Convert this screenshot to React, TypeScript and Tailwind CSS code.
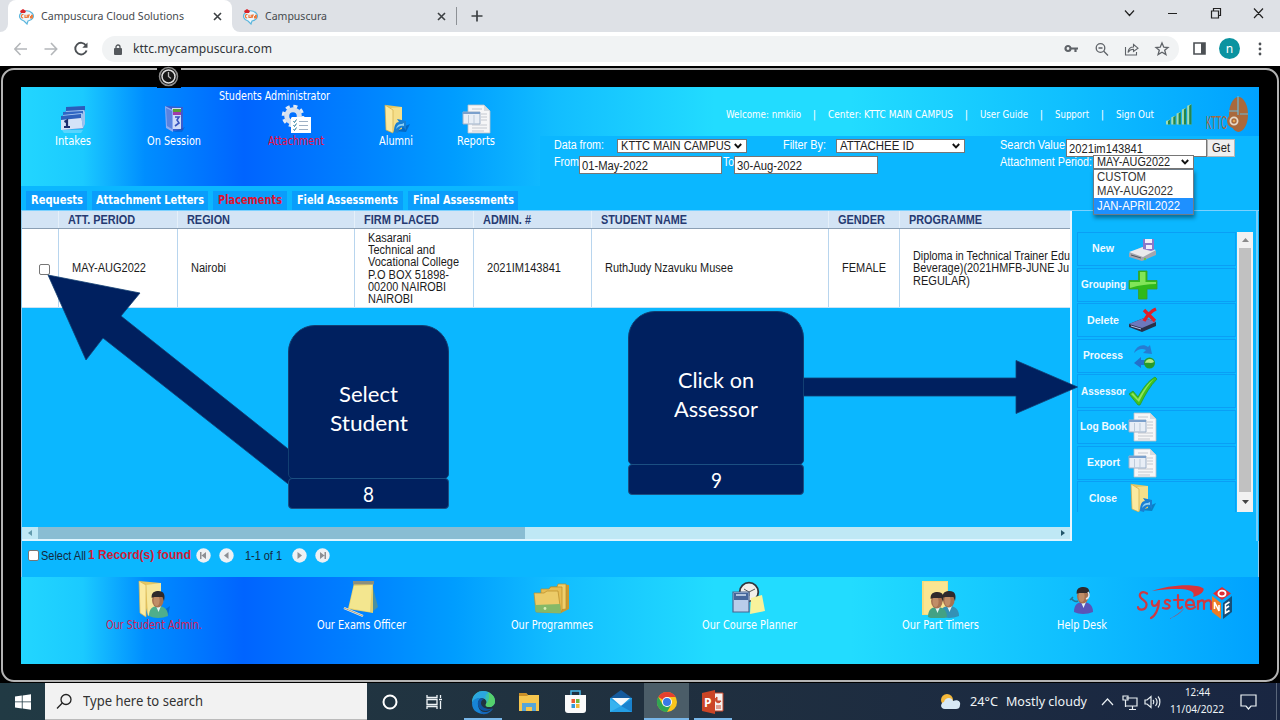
import { useLayoutEffect, useRef, useState } from 'react';
import type { ReactNode } from 'react';

const UI = "font-['Noto_Sans',sans-serif]";
const APP = "font-['DejaVu_Sans_Condensed','DejaVu_Sans',sans-serif]";

/* One line of text condensed or widened to a fixed width. */
function Fit({ w, className = '', children }: { w: number; className?: string; children: ReactNode }) {
  const ref = useRef<HTMLSpanElement>(null);
  const [scale, setScale] = useState(1);
  useLayoutEffect(() => {
    if (ref.current) {
      const rect = ref.current.getBoundingClientRect();
      if (rect.width > 0) setScale(w / rect.width);
    }
  }, [w]);
  return (
    <span className={`block shrink-0 whitespace-nowrap ${className}`} style={{ width: w }}>
      <span className="block w-max origin-left" ref={ref} style={{ transform: `scaleX(${scale})` }}>
        {children}
      </span>
    </span>
  );
}

/* ---------- browser chrome ---------- */

function Favicon() {
  return (
    <svg width="17" height="17" viewBox="0 0 17 17" className="shrink-0">
      <path d="M3 5C0 8 2 12 6 13L9 16L10 13C15 12 17 8 14 5C11 2 6 2 3 5Z" fill="#eef6fb" stroke="#5bb6dd" strokeWidth="1.2" />
      <path d="M2 3L5 1L8 3L7 5H3Z" fill="#d8232a" />
      <path d="M5.500 6.500C3 6 2.500 10 5.200 9.800M7 6.800V9.500H9.200V6.800M10.500 9.800V7H12M13 7.300H14.300V9.800H12.600V8.600H14" fill="none" stroke="#ee7a3a" strokeWidth="1.2" />
    </svg>
  );
}

function Cross({ className = '' }: { className?: string }) {
  return (
    <svg width="9" height="9" viewBox="0 0 9 9" className={`shrink-0 ${className}`}>
      <path d="M1 1L8 8M8 1L1 8" stroke="#3c4043" strokeWidth="1.6" />
    </svg>
  );
}

function TabStrip() {
  return (
    <div className={`flex h-8 items-stretch bg-[#dee1e6] ${UI}`}>
      <div className="w-2 bg-white"><div className="h-full rounded-br-lg bg-[#dee1e6]" /></div>
      <div className="flex w-[224px] items-center rounded-t-lg bg-white pl-2.5">
        <Favicon />
        <Fit w={143} className="ml-[6px] text-[11.5px] text-[#45494d]">Campuscura Cloud Solutions</Fit>
        <Cross className="ml-[29px]" />
      </div>
      <div className="flex w-[224px] items-center bg-white">
        <div className="flex h-full w-full items-center rounded-bl-lg bg-[#dee1e6] pl-2.5">
          <Favicon />
          <Fit w={62} className="ml-[6px] text-[11.5px] text-[#45494d]">Campuscura</Fit>
          <Cross className="ml-[110px]" />
        </div>
      </div>
      <div className="my-[7px] w-px bg-[#8d9196]" />
      <svg width="12" height="12" viewBox="0 0 12 12" className="ml-[14px] mt-[10px]">
        <path d="M6 .5V11.500M.5 6H11.500" stroke="#3c4043" strokeWidth="1.700" />
      </svg>
      <svg width="150" height="14" viewBox="0 0 150 14" className="ml-auto mr-[6px] mt-[6px]" fill="none" stroke="#222" strokeWidth="1.200">
        <path d="M1 4.500L5.500 9.500L10 4.500M44 7.500H53M87.500 5H94.500V12H87.500ZM89.500 5V2.500H96.500V9.500H94.500M130 2.500L139 12M139 2.500L130 12" />
      </svg>
    </div>
  );
}

function AddressBar() {
  return (
    <div className={`flex h-[34px] items-start bg-white pt-1 ${UI}`}>
      <svg width="76" height="26" viewBox="0 0 76 26" className="ml-[14px] shrink-0" fill="none">
        <path d="M13 13H1M6.500 7L.8 13L6.500 19M30.500 13H42.500M37 7L42.700 13L37 19" stroke="#b4b7ba" strokeWidth="1.600" />
        <path d="M72 9.500A5.800 5.800 0 1 0 72.600 14.500" stroke="#4c5054" strokeWidth="1.900" />
        <path d="M73.500 6.500V11.800H68.300Z" fill="#4c5054" />
      </svg>
      <div className="ml-[12px] flex h-[26px] w-[1077px] items-center rounded-full bg-[#f1f3f4] pl-3">
        <svg width="8" height="11" viewBox="0 0 8 11"><path d="M2 4.500V3A2 2 0 0 1 6 3V4.500" fill="none" stroke="#54585c" strokeWidth="1.300" /><rect y="4" width="8" height="7" rx="1" fill="#54585c" /></svg>
        <Fit w={139} className="ml-[11px] text-[13px] text-[#303438]">kttc.mycampuscura.com</Fit>
        <svg width="106" height="18" viewBox="0 0 106 18" className="ml-auto mr-[9px]" fill="none" stroke="#5f6368" strokeWidth="1.300">
          <circle cx="4" cy="8.500" r="2.500" strokeWidth="2.200" /><path d="M7 8.500H14M11.500 8.500V12" strokeWidth="2.200" />
          <circle cx="36.500" cy="8" r="4.300" /><path d="M39.800 11.300L44 15.500M34.500 8H38.500" />
          <path d="M61.500 7V15H72.500V12M64 12.500C64.500 8 67 7 69.500 7V4.500L74 8.200L69.500 11.500V9.300C67 9.300 65.500 10 64 12.500Z" strokeWidth="1.100" />
          <path d="M98 3L99.800 7.200L104 7.500L100.700 10.300L101.900 14.500L98 12.200L94.100 14.500L95.300 10.300L92 7.500L96.200 7.200Z" />
        </svg>
      </div>
      <svg width="13" height="13" viewBox="0 0 13 13" className="ml-[14px] mt-[6px]"><path d="M1 1H12V12H1Z" fill="none" stroke="#4c5054" strokeWidth="1.600" /><path d="M8 1H12V12H8Z" fill="#4c5054" /></svg>
      <div className="ml-[13px] mt-[2px] flex size-[21px] items-center justify-center rounded-full bg-[#0b93a0] text-[12px] leading-none text-white">n</div>
      <svg width="4" height="14" viewBox="0 0 4 14" className="ml-[18px] mt-[6px]" fill="#4c5054"><circle cx="2" cy="2" r="1.400" /><circle cx="2" cy="7" r="1.400" /><circle cx="2" cy="12" r="1.400" /></svg>
    </div>
  );
}

/* ---------- application icons ---------- */

function CalendarIcon() {
  return (
    <svg width="28" height="30" viewBox="0 0 28 30">
      <path d="M7 4L25 2L26 8V19L24 25L4 26Z" fill="#5e9be4" />
      <path d="M7 3L26 2V6L7 8Z" fill="#2a5cba" /><path d="M7 7L25 6V9L7 10Z" fill="#a9c9f2" />
      <path d="M4 8L24 7V10L4 12Z" fill="#2f66c4" /><path d="M4 11L23 9V13L4 14Z" fill="#a9c9f2" />
      <path d="M2 13L22 11L24 24L2 26Z" fill="#d5e3f8" /><path d="M2 12L22 10V14L2 16Z" fill="#2d61bd" />
      <path d="M22 11L26 7V20L24 24Z" fill="#9dc2ee" />
      <path d="M5.500 18L8 16.500V23M5 23H11" stroke="#1c2f70" strokeWidth="2.200" fill="none" />
      <path d="M3 26H24L22 29H5Z" fill="#9fe0ff" opacity=".45" />
    </svg>
  );
}

function SessionIcon() {
  return (
    <svg width="28" height="30" viewBox="0 0 28 30">
      <path d="M6 2L23 3V26L13 27Z" fill="#3a5dce" /><path d="M12 4H21V25H12Z" fill="#cfdcf8" /><path d="M13 5H21V8H13Z" fill="#5aa233" /><path d="M13 8H21V11H13Z" fill="#a03ca8" />
      <path d="M15 13H19L17 16L19 19L15 22" stroke="#3853be" strokeWidth="1.600" fill="none" /><path d="M5 2L13 6V28L6 24Z" fill="#8dacf1" /><path d="M6 4L12 7V25L7 22Z" fill="#5a83e0" />
      <path d="M13 28L25 23L22 28Z" fill="#0647ad" opacity=".4" />
    </svg>
  );
}

function GearIcon() {
  return (
    <svg width="30" height="30" viewBox="0 0 30 30">
      <circle cx="12" cy="12" r="9.800" fill="none" stroke="#e3ebf5" strokeWidth="3" strokeDasharray="4.100 3.600" />
      <circle cx="12" cy="12" r="6.300" fill="none" stroke="#d6e1ef" strokeWidth="5" />
      <path d="M11 13H30V29H10V14Z" fill="#fff" />
      <path d="M18 17.500H27M18 21.500H27M18 25.500H27" stroke="#9fb0c4" /><path d="M12.500 17L13.500 18.500L15.500 15.500M12.500 21L13.500 22.500L15.500 19.500M12.500 25L13.500 26.500L15.500 23.500" stroke="#2b7d9b" fill="none" />
    </svg>
  );
}

function FolderArrow() {
  return (
    <svg width="29" height="30" viewBox="0 0 29 30">
      <path d="M12 27L28 20L24 28Z" fill="#063f83" opacity=".45" />
      <path d="M4 1L20 3V25L10 28Z" fill="#e7c75e" /><path d="M9 4L20 3V24L11 26Z" fill="#f5df8a" /><path d="M3 1L11 6V29L4 26Z" fill="#fbe99f" stroke="#d3ac46" strokeWidth=".7" />
      <path d="M12 28C12 21 14 18 17 18L15 15L24 17L24 26L21 23C18 24 17 25 16 29Z" fill="#197fd3" /><path d="M14 25C15 21 17 20 20 20L22 19L22 22C18 21 16 23 14 25Z" fill="#8cd0f7" />
    </svg>
  );
}

function ReportIcon() {
  return (
    <svg width="29" height="30" viewBox="0 0 29 30">
      <path d="M6 1H22L28 7V29H6Z" fill="#f6f6f7" stroke="#bbc0c6" strokeWidth=".8" /><path d="M22 1V7H28" fill="#d8dbdf" />
      <path d="M10 5H20M19 10H25M19 13H25M19 16H25M10 21H25M10 24H25M10 27H22" stroke="#b9bec5" strokeWidth=".8" /><path d="M1 8H18V20H1Z" fill="#e8eef6" stroke="#9db0c8" /><path d="M1 8H18V10H1Z" fill="#7ba0cc" /><path d="M6.500 11V20M12 11V20" stroke="#becbda" />
    </svg>
  );
}

function SignalIcon() {
  return (
    <svg width="28" height="22" viewBox="0 0 28 22">
      {[0, 1, 2, 3, 4].map((i) => (
        <g key={i}>
          <path d={`M${1 + i * 5.3} ${17 - i * 3.8}L${5 + i * 5.3} ${15.500 - i * 3.8}V20.500H${1 + i * 5.3}Z`} fill="#a5dcb0" />
          <path d={`M${3 + i * 5.3} ${17 - i * 3.8}L${5.3 + i * 5.3} ${15.500 - i * 3.8}V20.500H${3 + i * 5.3}Z`} fill="#26864a" />
        </g>
      ))}
    </svg>
  );
}

function KttcLogo() {
  return (
    <div className="flex items-start text-[#a9693c]">
      <Fit w={21} className="ml-px mt-[17px] font-['Liberation_Sans',sans-serif] text-[18px] leading-[20px]">KTTC</Fit>
      <svg width="22" height="37" viewBox="22 0 22 37">
        <ellipse cx="33.500" cy="18.500" rx="9.500" ry="17.500" fill="#a9693c" />
        <path d="M33 0V19M24 15H33M35 18H43" stroke="#6cb9d8" strokeWidth="1.200" />
        <circle cx="29" cy="25" r="7" fill="#a9693c" /><circle cx="29" cy="25" r="3.600" fill="none" stroke="#e6d9c7" strokeWidth="1.800" /><circle cx="29" cy="25" r="1.300" fill="#e6a24c" />
      </svg>
    </div>
  );
}

function Person({ x = 0, y = 0, body = '#4fae8c' }: { x?: number; y?: number; body?: string }) {
  return (
    <g transform={`translate(${x} ${y})`}>
      <path d="M0 25C0 18 3 16 7 15H11C15 16 19 18 19 25C13 27.500 5 27.500 0 25Z" fill={body} /><path d="M7 15L9.500 21L12 15Z" fill="#e6f5f5" />
      <ellipse cx="8.800" cy="9" rx="5.800" ry="7.600" fill="#a87250" /><ellipse cx="7.600" cy="9.500" rx="3" ry="5.500" fill="#cb9870" opacity=".7" /><path d="M2.700 7C2 1 6 0 9.500 0C15 0 16.500 4 15 10L13.500 6C9 6.500 5 5 2.700 7Z" fill="#2f2a2c" />
    </g>
  );
}

function AdminIcon() {
  return (
    <svg width="34" height="38" viewBox="0 0 34 38">
      <path d="M20 35L33 26L31 36Z" fill="#063f83" opacity=".35" />
      <path d="M2 1L24 3V32L11 36Z" fill="#e5c763" /><path d="M9 5L24 3V31L11 35Z" fill="#f6e79b" /><path d="M2 1L9 5V37L3 33Z" fill="#fbeaa0" stroke="#d6b353" strokeWidth=".7" />
      <Person x={12} y={11} />
    </svg>
  );
}

function ExamsIcon() {
  return (
    <svg width="36" height="38" viewBox="0 0 36 38">
      <path d="M29 4L35 27L28 33Z" fill="#4b90a0" /><path d="M11 3L30 2L30 33L5 29Z" fill="#e5cf6a" /><path d="M11 6L29 5L27 32L6 28Z" fill="#f3e68f" /><path d="M10 1H31V4.500H10Z" fill="#8a8f7e" /><path d="M1 28L20 36" stroke="#eaf0f2" strokeWidth="2.400" /><path d="M1 28L20 36" stroke="#a98e59" strokeWidth=".8" />
    </svg>
  );
}

function ProgrammesIcon() {
  return (
    <svg width="38" height="38" viewBox="0 0 38 38">
      <path d="M24 7L27 4L36 5V29L28 33Z" fill="#c99a31" /><path d="M17 7H24L25 4H33V29L18 31Z" fill="#efce6b" stroke="#b98c2a" strokeWidth=".7" /><path d="M8 9H16L18 7H29V31H8Z" fill="#e6bd53" stroke="#b98c2a" strokeWidth=".7" />
      <path d="M1 13H11L14 11H25L28 33L3 32Z" fill="#eccb68" stroke="#b98c2a" strokeWidth=".7" /><path d="M2 25L27 24L28 33L3 32Z" fill="#84b968" /><circle cx="12" cy="28.500" r="1.400" fill="#d8efb5" />
    </svg>
  );
}

function PlannerIcon() {
  return (
    <svg width="34" height="38" viewBox="0 0 34 38">
      <circle cx="17" cy="12" r="9.300" fill="#f2efea" stroke="#30363d" strokeWidth="1.800" /><path d="M17 12L23 9M17 12L12 9M17 12V16" stroke="#555" fill="none" />
      <path d="M19 18L30 15L33 31L18 34Z" fill="#f8f29b" /><path d="M1 12H17V32H1Z" fill="#b9cdea" stroke="#49658f" strokeWidth="1.200" /><path d="M2 13H16V20H2Z" fill="#46679c" /><path d="M4 15H14" stroke="#d5e3f5" strokeWidth="1.500" />
    </svg>
  );
}

function PartTimersIcon() {
  return (
    <svg width="38" height="38" viewBox="0 0 38 38">
      <path d="M1 1H27V35H1Z" fill="#f6dc7b" /><path d="M3 2H26V34H3Z" fill="#fae591" /><Person x={19} y={11} body="#3491b5" /><Person x={7} y={12} body="#43a184" />
    </svg>
  );
}

function HelpIcon() {
  return (
    <svg width="26" height="38" viewBox="0 0 26 38"><Person x={5} y={7} body="#5955b8" /><path d="M1 20L4 17M2 18C5 22 7 22 9 21" stroke="#237898" strokeWidth="1.500" fill="none" /><path d="M19 12C21 15 20 18 17 19" stroke="#dfe9f4" strokeWidth="1.600" fill="none" /></svg>
  );
}

function SystemOneLogo() {
  return (
    <svg width="98" height="38" viewBox="0 0 98 38">
      <path d="M15 6C30 0 58 -2 66 3C69 6 62 11 56 12C60 4 45 2 15 6Z" fill="#d8343b" />
      <path d="M32 34C40 31 46 26 47 23C43 28 38 31 32 34Z" fill="#d8343b" />
      <path d="M10 8.500C5 5 1 9 4 13C7 16 11 17 9 22C7 26 1 25 1 22M15 16C14 22 19 23 22 16M22 16C22 24 18 31 14 33M33 16C28 13 26 18 30 19C35 21 32 25 26 23M41 10V21C41 24 44 24 45 22M37 15H46M49 20H57C57 13 49 13 49 19C49 25 55 25 58 22M61 24V16M61 18C64 14 67 15 67 18V24M67 18C70 14 74 15 74 18V24" fill="none" stroke="#cf3942" strokeWidth="2.200" strokeLinecap="round" />
      <path d="M85 2L94 8.500L85 15L76 8.500Z" fill="#dd2f36" /><path d="M75 11L84 18V34L75 27Z" fill="#ef7c25" /><path d="M95 11L86 18V34L95 27Z" fill="#184f78" />
      <ellipse cx="85" cy="8.500" rx="3.600" ry="2.800" fill="none" stroke="#fff" strokeWidth="1.700" />
      <path d="M77.500 24V17L82 26V20M92.500 17L88.500 19.500V28L92.500 25.500M88.500 23.500L92 21" stroke="#fff" strokeWidth="1.600" fill="none" />
    </svg>
  );
}

/* ---------- application header ---------- */

const navItems = [
  { label: 'Intakes', w: 36, cell: 'w-[104px]', icon: <CalendarIcon />, active: false },
  { label: 'On Session', w: 54, cell: 'w-[98px]', icon: <SessionIcon />, active: false },
  { label: 'Attachment', w: 56, cell: 'w-[146px]', icon: <GearIcon />, active: true },
  { label: 'Alumni', w: 34, cell: 'w-[54px]', icon: <FolderArrow />, active: false },
  { label: 'Reports', w: 38, cell: 'w-[106px]', icon: <ReportIcon />, active: false },
];

const tabs = [
  { label: 'Requests', w: 52, cell: 'w-[61px]', active: false },
  { label: 'Attachment Letters', w: 108, cell: 'w-[116px]', active: false },
  { label: 'Placements', w: 64, cell: 'w-[74px]', active: true },
  { label: 'Field Assessments', w: 101, cell: 'w-[111px]', active: false },
  { label: 'Final Assessments', w: 101, cell: 'w-[110px]', active: false },
];

function Select({ label, w, cell }: { label: string; w: number; cell: string }) {
  return (
    <div className={`flex h-[14px] shrink-0 items-center justify-between border border-[#767676] bg-white pl-[3px] pr-1 text-[12px] leading-[13px] text-[#222] ${cell}`}>
      <Fit w={w}>{label}</Fit>
      <svg width="8" height="6" viewBox="0 0 8 6"><path d="M.8 1L4 4.300L7.200 1" fill="none" stroke="#111" strokeWidth="1.900" /></svg>
    </div>
  );
}

function Input({ value, w, cell }: { value: string; w: number; cell: string }) {
  return (
    <div className={`flex h-[18px] shrink-0 items-center border border-[#767676] bg-white pl-[2px] pt-px text-[12px] leading-4 text-[#222] ${cell}`}>
      <Fit w={w}>{value}</Fit>
    </div>
  );
}

function Header() {
  return (
    <div className="flex h-[99px] shrink-0">
      <div className={`w-[519px] text-[12px] text-white ${APP}`}>
        <Fit w={111} className="ml-[198px] mt-[2px] h-[15px] leading-[15px]">Students Administrator</Fit>
        <div className="flex">
          {navItems.map((n) => (
            <div key={n.label} className={`flex shrink-0 flex-col items-center ${n.cell}`}>
              {n.icon}
              <Fit w={n.w} className={`leading-[15px] ${n.active ? 'text-[#e8103f]' : ''}`}>{n.label}</Fit>
            </div>
          ))}
        </div>
      </div>
      <div className="flex w-[719px] flex-col">
        <div className={`flex h-[49px] pl-[186px] text-[11px] leading-[14px] text-white ${APP}`}>
          <div className="flex pt-[21px]">
            <Fit w={75}>Welcome: nmkiio</Fit>
            <span className="w-[27px] text-center">|</span>
            <Fit w={125}>Center: KTTC MAIN CAMPUS</Fit>
            <span className="w-[27px] text-center">|</span>
            <Fit w={48}>User Guide</Fit>
            <span className="w-[27px] text-center">|</span>
            <Fit w={34}>Support</Fit>
            <span className="w-[27px] text-center">|</span>
            <Fit w={38}>Sign Out</Fit>
          </div>
          <div className="ml-[11px] mt-[17px]"><SignalIcon /></div>
          <div className="ml-[12px] mt-[9px]"><KttcLogo /></div>
        </div>
        <div className="h-[50px] bg-[#0bb7ff] pl-[14px] pt-[3px] text-[12px] leading-[13px] text-white">
          <div className="flex h-[17px]">
            <Fit w={50}>Data from:</Fit>
            <div className="ml-[13px]"><Select label="KTTC MAIN CAMPUS" w={110} cell="w-[130px]" /></div>
            <Fit w={43} className="ml-[36px]">Filter By:</Fit>
            <div className="ml-[10px]"><Select label="ATTACHEE ID" w={74} cell="w-[129px]" /></div>
            <Fit w={65} className="ml-[35px]">Search Value</Fit>
            <div className="ml-px"><Input value="2021im143841" w={74} cell="w-[141px]" /></div>
            <div className="flex h-[18px] w-[28px] items-center justify-center border border-[#b5b5b5] bg-[#efefef] pt-px text-[#222]"><Fit w={18}>Get</Fit></div>
          </div>
          <div className="flex">
            <Fit w={25}>From</Fit>
            <Input value="01-May-2022" w={66} cell="w-[143px]" />
            <Fit w={11} className="ml-px">To</Fit>
            <Input value="30-Aug-2022" w={65} cell="w-[144px]" />
            <Fit w={92} className="ml-[122px]">Attachment Period:</Fit>
            <div className="relative z-20 -mt-px ml-px">
              <Select label="MAY-AUG2022" w={73} cell="w-[101px]" />
              <div className="absolute left-0 top-[14px] w-[101px] border border-[#6c7b88] bg-white text-[12px] leading-[14px] text-[#333] shadow-[1px_3px_4px_rgba(0,0,0,0.4)]">
                <Fit w={49} className="ml-[3px]">CUSTOM</Fit>
                <Fit w={76} className="ml-[3px]">MAY-AUG2022</Fit>
                <div className="bg-[#1e90ff] py-px pl-[3px] text-white"><Fit w={83}>JAN-APRIL2022</Fit></div>
              </div>
            </div>
          </div>
        </div>
      </div>
    </div>
  );
}

function TabRow() {
  return (
    <div className={`flex h-[24px] shrink-0 items-end gap-[5px] bg-[#0bb7ff] pl-[5px] text-[12px] font-bold text-white ${APP}`}>
      {tabs.map((t) => (
        <div key={t.label} className={`flex h-[19px] shrink-0 items-center justify-center bg-[#0a9dfb] leading-[19px] ${t.cell}`}>
          <Fit w={t.w} className={t.active ? 'text-[#e0122f]' : ''}>{t.label}</Fit>
        </div>
      ))}
    </div>
  );
}

/* ---------- records table ---------- */

type Column = { head: string; hw: number; cell: string; lines: { text: string; w: number }[] };

const columns: Column[] = [
  { head: 'ATT. PERIOD', hw: 67, cell: 'w-[119px]', lines: [{ text: 'MAY-AUG2022', w: 74 }] },
  { head: 'REGION', hw: 43, cell: 'w-[177px]', lines: [{ text: 'Nairobi', w: 35 }] },
  {
    head: 'FIRM PLACED', hw: 75, cell: 'w-[119px]',
    lines: [
      { text: 'Kasarani', w: 43 }, { text: 'Technical and', w: 67 }, { text: 'Vocational College', w: 91 },
      { text: 'P.O BOX 51898-', w: 81 }, { text: '00200 NAIROBI', w: 78 }, { text: 'NAIROBI', w: 45 },
    ],
  },
  { head: 'ADMIN. #', hw: 48, cell: 'w-[118px]', lines: [{ text: '2021IM143841', w: 74 }] },
  { head: 'STUDENT NAME', hw: 86, cell: 'w-[237px]', lines: [{ text: 'RuthJudy Nzavuku Musee', w: 128 }] },
  { head: 'GENDER', hw: 47, cell: 'w-[71px]', lines: [{ text: 'FEMALE', w: 44 }] },
  {
    head: 'PROGRAMME', hw: 73, cell: 'w-[171px]',
    lines: [{ text: 'Diploma in Technical Trainer Edu', w: 157 }, { text: 'Beverage)(2021HMFB-JUNE Ju', w: 156 }, { text: 'REGULAR)', w: 57 }],
  },
];

function Records() {
  return (
    <div className="flex h-[330px] w-[1051px] shrink-0 flex-col overflow-hidden border-l border-r-2 border-l-[#8fcbee] border-r-[#eaf7ff]">
      <div className="flex h-[18px] shrink-0 border-b border-[#8b9fb4] bg-[#d3e4f5] text-[12px] font-bold leading-[18px] text-[#253a72]">
        <div className="w-[36px] shrink-0" />
        {columns.map((c) => (
          <div key={c.head} className={`shrink-0 border-l border-[#e5f0fa] pl-[9px] ${c.cell}`}><Fit w={c.hw}>{c.head}</Fit></div>
        ))}
      </div>
      <div className="flex h-[79px] shrink-0 border-b border-[#cbe3f5] bg-white text-[12px] leading-[12.200px] text-[#1b1b1b]">
        <div className="flex w-[36px] shrink-0 items-center justify-center pl-[8px] pt-[2px]"><div className="size-[11px] rounded-[2px] border border-[#767676] bg-white" /></div>
        {columns.map((c) => (
          <div key={c.head} className={`flex shrink-0 flex-col justify-center border-l border-[#b8d5ee] pl-[13px] pt-px ${c.cell}`}>
            {c.lines.map((l) => <Fit key={l.text} w={l.w}>{l.text}</Fit>)}
          </div>
        ))}
      </div>
      <div className="flex-1" />
      <div className="flex h-[14px] shrink-0 items-stretch border-b-2 border-[#dff5ff] bg-[#bfe8f5]">
        <div className="flex w-[16px] items-center justify-center"><svg width="4" height="6"><path d="M4 0V6L0 3Z" fill="#639bae" /></svg></div>
        <div className="w-[487px] bg-[#89bdd3]" />
        <div className="ml-auto flex w-[15px] items-center justify-center"><svg width="4" height="6"><path d="M0 0V6L4 3Z" fill="#24566a" /></svg></div>
      </div>
    </div>
  );
}

/* ---------- action list ---------- */

function DriveIcon() {
  return (
    <svg width="29" height="30" viewBox="0 0 29 30"><path d="M1 19L14 13L28 17V21L14 27L1 23Z" fill="#a3a6b0" /><path d="M1 18L15 13L28 16L15 23Z" fill="#e9eaed" /><path d="M3 21L13 24" stroke="#52565d" /><path d="M15 5H26V16L23 17L15 15Z" fill="#8a79c8" /><path d="M17 5H24V9H17ZM18 11H24V15H18Z" fill="#f2effb" /><circle cx="17" cy="25" r="1.200" fill="#6ec14a" /></svg>
  );
}
function PlusIcon() {
  return <svg width="30" height="30" viewBox="0 0 30 30"><path d="M10.500 1H19V10.500H29V19H19V29H10.500V19H1V10.500H10.500Z" fill="#2fb91b" stroke="#3d9c26" strokeWidth=".8" /><path d="M12 2H17.500V12H28V14C20 14 12 15 2 18V12H12Z" fill="#81e458" /></svg>;
}
function DeleteIcon() {
  return <svg width="29" height="30" viewBox="0 0 29 30"><path d="M1 19L16 13L28 17V21L14 27L1 22Z" fill="#29314b" /><path d="M1 19L16 13L28 17L14 23Z" fill="#6d78bd" /><path d="M3 21L13 24" stroke="#b6c3ef" /><path d="M16 5L27 16M28 4C23 6 19 11 16 16" stroke="#df2029" strokeWidth="3.400" fill="none" /></svg>;
}
function ProcessIcon() {
  return <svg width="29" height="30" viewBox="0 0 29 30"><path d="M6 12C8 5 15 2 20 6L22 4L24 13L15 12L18 9C14 7 10 8 6 12Z" fill="#267cd2" /><path d="M6 22L13 16V19H19V24H13V27Z" fill="#2370cb" /><circle cx="21.500" cy="22" r="5.500" fill="#279b2b" /><path d="M17 22C18 17 25 17 26 21C23 23 20 21 17 22Z" fill="#b6e983" /></svg>;
}
function TickIcon() {
  return <svg width="30" height="30" viewBox="0 0 30 30"><path d="M1 18L5 15L10 21C15 12 20 5 27 1L29 3C22 10 17 19 12 29H10Z" fill="#42c320" stroke="#27971d" strokeWidth=".7" /><path d="M3 18L5 17L10 23C15 14 20 7 26 3C19 10 15 18 11 26Z" fill="#91e55c" /></svg>;
}

const actions = [
  { label: 'New', w: 22, icon: <DriveIcon /> },
  { label: 'Grouping', w: 45, icon: <PlusIcon /> },
  { label: 'Delete', w: 32, icon: <DeleteIcon /> },
  { label: 'Process', w: 40, icon: <ProcessIcon /> },
  { label: 'Assessor', w: 45, icon: <TickIcon /> },
  { label: 'Log Book', w: 47, icon: <ReportIcon /> },
  { label: 'Export', w: 33, icon: <ReportIcon /> },
  { label: 'Close', w: 28, icon: <FolderArrow /> },
];

function Actions() {
  return (
    <div className="flex w-[186px] border-r-2 border-[#74cdfb] pl-[5px] pt-[21px]">
      <div className="h-[280px] w-[159px] shrink-0 overflow-hidden text-[11.5px] font-bold text-[#f0faff]">
        {actions.map((a) => (
          <div key={a.label} className="mb-[1.600px] flex h-[34px] items-center border border-[#0a9ff5]">
            <div className="flex w-[50px] justify-center"><Fit w={a.w}>{a.label}</Fit></div>
            {a.icon}
          </div>
        ))}
      </div>
      <div className="ml-px flex h-[280px] w-[16px] shrink-0 flex-col items-center bg-[#f1f1f1]">
        <svg width="7" height="4" className="my-[6px]"><path d="M0 4H7L3.500 0Z" fill="#8b8b8b" /></svg>
        <div className="w-[12px] flex-1 bg-[#c1c1c1]" />
        <svg width="7" height="4" className="my-[8px]"><path d="M0 0H7L3.500 4Z" fill="#444" /></svg>
      </div>
    </div>
  );
}

function PageButton({ d, className }: { d: string; className: string }) {
  return (
    <svg width="15" height="15" viewBox="0 0 15 15" className={className}><circle cx="7.500" cy="7.500" r="7.200" fill="#eef1f4" /><path d={d} fill="#8d8f94" /></svg>
  );
}

function Pager() {
  return (
    <div className="flex h-[36px] shrink-0 items-start border-x border-[#8fcbee] bg-[#0bb7ff] pl-[6px] pt-[7px] text-[12px] leading-[15px] text-[#14283c]">
      <div className="mt-[2px] size-[11px] rounded-[2px] border border-[#767676] bg-white" />
      <Fit w={45} className="ml-[2px] mt-px">Select All</Fit>
      <Fit w={103} className="ml-[2px] text-[12.5px] font-bold text-[#d01c35]">1 Record(s) found</Fit>
      <PageButton className="ml-[5px]" d="M4 4H5.500V11H4ZM10 4V11L5.500 7.500Z" />
      <PageButton className="ml-[8px]" d="M9.500 4V11L5 7.500Z" />
      <Fit w={37} className="ml-[11px] mt-px">1-1 of 1</Fit>
      <PageButton className="ml-[10px]" d="M5.500 4V11L10 7.500Z" />
      <PageButton className="ml-[8px]" d="M9.500 4H11V11H9.500ZM5 4V11L9.500 7.500Z" />
    </div>
  );
}

const footerItems = [
  { label: 'Our Student Admin.', w: 96, cell: 'w-[266px]', icon: <AdminIcon />, active: true },
  { label: 'Our Exams Officer', w: 89, cell: 'w-[148px]', icon: <ExamsIcon />, active: false },
  { label: 'Our Programmes', w: 82, cell: 'w-[233px]', icon: <ProgrammesIcon />, active: false },
  { label: 'Our Course Planner', w: 95, cell: 'w-[162px]', icon: <PlannerIcon />, active: false },
  { label: 'Our Part Timers', w: 77, cell: 'w-[220px]', icon: <PartTimersIcon />, active: false },
  { label: 'Help Desk', w: 50, cell: 'w-[64px]', icon: <HelpIcon />, active: false },
];

function Footer() {
  return (
    <div className={`flex h-[87px] shrink-0 pt-[3px] text-[12px] leading-[15px] text-white ${APP}`}>
      {footerItems.map((f) => (
        <div key={f.label} className={`flex shrink-0 flex-col items-center ${f.cell}`}>
          {f.icon}
          <Fit w={f.w} className={f.active ? 'text-[#d32152]' : ''}>{f.label}</Fit>
        </div>
      ))}
      <div className="ml-[23px] mt-[5px]"><SystemOneLogo /></div>
    </div>
  );
}

/* ---------- callouts laid over the page ---------- */

function Callout({ className, lines, number }: { className: string; lines: { text: string; w: number }[]; number: string }) {
  return (
    <div className={`absolute z-30 flex h-[184px] flex-col font-['Lato',sans-serif] text-white ${className}`}>
      <div className="flex h-[154px] flex-col items-center rounded-t-[27px] rounded-b-[5px] border border-[#123f72] bg-[#00205f] pt-[54px] text-[21.5px] leading-[29px]">
        {lines.map((l) => <Fit key={l.text} w={l.w}>{l.text}</Fit>)}
      </div>
      <div className="-mt-px flex h-[31px] items-center justify-center rounded-[4px] border border-[#1b4f82] bg-[#00205f] pb-px text-[21px] leading-none"><Fit w={11}>{number}</Fit></div>
    </div>
  );
}

function Overlays() {
  return (
    <>
      <svg width="1280" height="720" viewBox="0 0 1280 720" className="pointer-events-none absolute left-0 top-0 z-20">
        <path d="M48 275L140 293L121 316L292 452V487L103 338L86 360Z" fill="#00205f" stroke="#123f72" strokeWidth=".8" />
        <path d="M802 378H1016V360.500L1077.500 387L1016 413.500V396H802Z" fill="#00205f" stroke="#123f72" strokeWidth=".8" />
      </svg>
      <Callout className="left-[288px] top-[325px] w-[161px]" lines={[{ text: 'Select', w: 59 }, { text: 'Student', w: 78 }]} number="8" />
      <Callout className="left-[628px] top-[311px] w-[176px]" lines={[{ text: 'Click on', w: 76 }, { text: 'Assessor', w: 84 }]} number="9" />
    </>
  );
}

/* ---------- taskbar ---------- */

function TaskIcon({ children, open = false, current = false }: { children: ReactNode; open?: boolean; current?: boolean }) {
  return (
    <div className={`flex w-[45px] shrink-0 flex-col items-center justify-between ${current ? 'bg-[#4b5d68]' : ''}`}>
      <svg width="26" height="26" viewBox="0 0 26 26" className="mt-[6px]">{children}</svg>
      <div className={`h-[2px] ${current ? 'w-full' : 'w-[38px]'} ${open || current ? 'bg-[#78b6e8]' : ''}`} />
    </div>
  );
}

function Taskbar() {
  return (
    <div className={`flex h-[37px] bg-gradient-to-r from-[#213a44] via-[#20303f] to-[#192642] text-[#eef3f6] ${UI}`}>
      <div className="flex w-[45px] items-center justify-center">
        <svg width="16" height="16" viewBox="0 0 16 16" fill="#fff"><path d="M0 2.500L6.800 1.500V7.500H0ZM7.600 1.400L16 .2V7.500H7.600ZM0 8.300H6.800V14.500L0 13.500ZM7.600 8.300H16V15.800L7.600 14.600Z" /></svg>
      </div>
      <div className="flex w-[322px] items-center border-b border-[#bbb] bg-[#f2f2f2] pl-[11px] text-[#333]">
        <svg width="17" height="17" viewBox="0 0 17 17" fill="none" stroke="#222" strokeWidth="1.300"><circle cx="10" cy="6.500" r="5" /><path d="M6.300 10L1 15.500" /></svg>
        <Fit w={120} className="ml-[10px] text-[14px] leading-5">Type here to search</Fit>
      </div>
      <TaskIcon><circle cx="13" cy="13" r="6.500" fill="none" stroke="#fff" strokeWidth="2" /></TaskIcon>
      <TaskIcon><path d="M5 6V8.500H15V6M5 20V17.500H15V20M5 10.500H15V15.500H5ZM18.500 6V9M18.500 12V20M17 10.500H20" fill="none" stroke="#eef3f6" strokeWidth="1.300" /></TaskIcon>
      <div className="ml-[3px] flex gap-px">
        <TaskIcon open>
          <path d="M2 14C2 5 8 2 13 2C20 2 25 7 25 12C25 16 22 18 19 18C16 18 15 16.500 16 15C17.500 12 15 9 11.500 9C7 9 3 11 2 14Z" fill="#39bfae" />
          <path d="M2 14C2 6 8 2 13 2C15 2 17 2.500 19 3.500C15 5 15 8 16 11C15 9.500 13.500 9 11.500 9C7 9 3 11 2 14Z" fill="#2ba6e0" />
          <path d="M18 3.300C23 5 25 9 25 12C25 16 22 18 19 18C16 18 15 16.500 16 15C19 12 20 7 18 3.300Z" fill="#55d06c" />
          <path d="M2 14C3 10 7 8.500 11.500 9C8.500 10.500 8 13 8 15C8 20 12 25 17 24C15 25.500 2 26 2 14Z" fill="#1784d6" />
          <path d="M11.500 9C8 11 7.500 14 8 16C9 22 16 24 23 19.500C18 21 11 19 11 14C11 12 12.500 10.500 14 10Z" fill="#0f53a0" />
          <path d="M8.500 18C10 24 17 25 23 19.500C20 25 14 26 11 24.500Z" fill="#1666b8" />
        </TaskIcon>
        <TaskIcon><path d="M3 4H10L12 6H23V22H3Z" fill="#f6c64e" /><path d="M3 4H10L12 7H3Z" fill="#cb9028" /><path d="M6 22V14H20V22H16V18H10V22Z" fill="#56a5d9" /></TaskIcon>
        <TaskIcon><path d="M9 7V2H18V7" fill="none" stroke="#47b8ea" strokeWidth="1.500" /><path d="M3 6H24V21C24 23 23 24 21 24H6C4 24 3 23 3 21Z" fill="#fafafa" /><path d="M9.500 10H13V14H9.500Z" fill="#eb5a33" /><path d="M14 10H17.500V14H14Z" fill="#72b63c" /><path d="M9.500 15H13V19H9.500Z" fill="#329adc" /><path d="M14 15H17.500V19H14Z" fill="#f2b836" /></TaskIcon>
        <TaskIcon><path d="M2 9L13 1L24 9V23H2Z" fill="#145a9c" /><path d="M2 9H24V23H2Z" fill="#249fe5" /><path d="M4 9H22L13 17Z" fill="#f4f8fb" /><path d="M2 10L13 17L2 23Z" fill="#36b3ef" /><path d="M24 10L13 17L24 23Z" fill="#1982ce" /></TaskIcon>
        <TaskIcon current>
          <circle cx="13" cy="13" r="10" fill="#fbc51c" /><path d="M13 13L4.300 8A10 10 0 0 1 21.700 8H13Z" fill="#e5402f" /><path d="M4.300 8A10 10 0 0 0 13 23L17.300 15.500L8.700 15.500Z" fill="#31a553" /><circle cx="13" cy="13" r="5" fill="#fff" /><circle cx="13" cy="13" r="4" fill="#3979e8" />
        </TaskIcon>
        <TaskIcon open><path d="M13 4H23V22H13Z" fill="#f4f1ef" stroke="#c9472a" /><path d="M2 4L15 1V25L2 22Z" fill="#cb4526" /><text x="4" y="17.500" fontSize="12" fontWeight="700" fill="#fff" fontFamily="Open Sans">P</text><path d="M17 8A3 3 0 1 0 21 12H17ZM16 17H21M16 19H21" fill="#c9472a" stroke="#c9472a" /></TaskIcon>
      </div>

      <div className="ml-auto flex items-center">
        <svg width="21" height="17" viewBox="0 0 21 17"><circle cx="7" cy="7" r="6" fill="#f4b83a" /><path d="M5 16C0 16 0 10 4 9C5 4 12 4 13 8C18 6 21 9 20 12C20 15 18 16 16 16Z" fill="#d8e9f6" /></svg>
        <Fit w={28} className="ml-[9px] pt-px text-[13px]">24°C</Fit>
        <Fit w={81} className="ml-[8px] pt-px text-[13px]">Mostly cloudy</Fit>
        <svg width="66" height="18" viewBox="0 0 66 18" className="ml-[12px]" fill="none" stroke="#e8eef2" strokeWidth="1.200">
          <path d="M3 12L8.500 6L14 12M27 5H38V13H27M30 16.500H37M33.500 13V16.500M24 3H29V7H24ZM26.500 7V14" />
          <path d="M46 7H48L52 3.500V14.500L48 11H46ZM54 7C55 8 55 10 54 11M56.500 5C58.500 7.500 58.500 10.500 56.500 13M59 3.500C61.500 6 61.500 12 59 14.500" />
        </svg>
      </div>
      <div className="ml-[5px] flex w-[54px] flex-col items-center text-[11px] leading-[17px]">
        <Fit w={25}>12:44</Fit>
        <Fit w={54}>11/04/2022</Fit>
      </div>
      <svg width="18" height="17" viewBox="0 0 18 17" className="ml-[16px] mr-[18px] mt-[11px]" fill="none" stroke="#eef3f6" strokeWidth="1.200"><path d="M1 1H16V12H11L8.500 15L6 12H1Z" /></svg>
      <div className="mr-[3px] w-px bg-[#59667a]" />
    </div>
  );
}

export default function App() {
  return (
    <div className="relative flex h-[720px] w-[1280px] flex-col overflow-hidden bg-black font-['Liberation_Sans',Arial,sans-serif]">
      <TabStrip />
      <AddressBar />
      <div className="relative flex h-[617px] bg-black px-px pb-px pt-[2px]">
        <div className="flex flex-1 rounded-[13px] border-2 border-[#b4b4b4] pl-[18px] pt-[17px]">
          <div className="flex h-[577px] w-[1238px] flex-col bg-[linear-gradient(90deg,#22d6ff_0%,#1bcaff_5%,#008eff_10%,#0064ff_18%,#0080ff_27%,#009dff_35%,#12bdff_43%,#22dcff_56%,#22dcff_67%,#10c0ff_84%,#00a2ff_100%)]">
            <Header />
            <TabRow />
            <div className="flex h-[331px] shrink-0 border-t border-[#7bd1ff] bg-[#0bb7ff]">
              <Records />
              <Actions />
            </div>
            <Pager />
            <Footer />
          </div>
        </div>
        <svg width="24" height="22" viewBox="0 0 24 22" className="absolute left-[157px] top-0">
          <rect width="24" height="22" fill="#000" /><circle cx="11.500" cy="10.500" r="9" fill="#111" stroke="#8b8b8b" strokeWidth="1.500" /><circle cx="11.500" cy="10.500" r="6.500" fill="#181818" stroke="#ddd" strokeWidth="1.500" /><path d="M11.500 6V10.500L14 12.500" stroke="#bbb" fill="none" strokeWidth="1.300" />
        </svg>
      </div>
      <Taskbar />
      <Overlays />
    </div>
  );
}
